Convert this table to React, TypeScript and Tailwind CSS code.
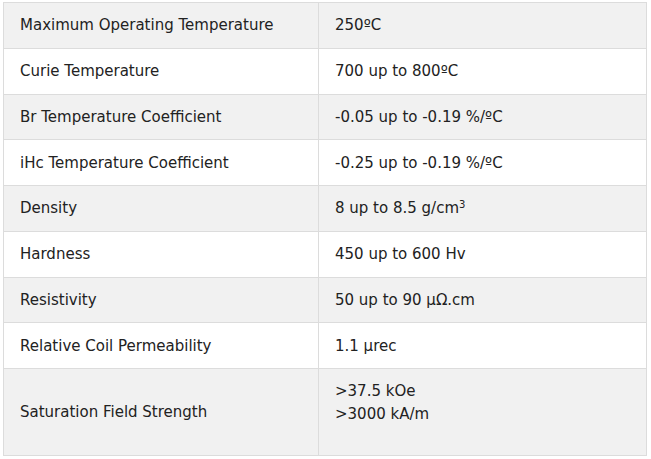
import React from "react";

const rows: { k: string; v: React.ReactNode; tall?: boolean }[] = [
  { k: "Maximum Operating Temperature", v: "250ºC" },
  { k: "Curie Temperature", v: "700 up to 800ºC" },
  { k: "Br Temperature Coefficient", v: "-0.05 up to -0.19 %/ºC" },
  { k: "iHc Temperature Coefficient", v: "-0.25 up to -0.19 %/ºC" },
  {
    k: "Density",
    v: (
      <>
        8 up to 8.5 g/cm<sup className="text-[10px]">3</sup>
      </>
    ),
  },
  { k: "Hardness", v: "450 up to 600 Hv" },
  { k: "Resistivity", v: "50 up to 90 μΩ.cm" },
  { k: "Relative Coil Permeability", v: "1.1 μrec" },
  {
    k: "Saturation Field Strength",
    v: (
      <>
        &gt;37.5 kOe
        <br />
        &gt;3000 kA/m
        <br />
        &nbsp;
      </>
    ),
    tall: true,
  },
];

export default function App() {
  return (
    <div className="w-[651px] h-[459px] bg-white pt-[2px] pl-[3px]">
      <div
        className="w-[644px] grid grid-cols-[315px_1fr] border-t border-l border-[#dcdcdc] text-[15px] leading-[23px] text-[#222222]"
        style={{ fontFamily: "'DejaVu Sans', sans-serif" }}
      >
        {rows.map((r, i) => {
          const bg = i % 2 === 0 ? "bg-[#f1f1f1]" : "bg-white";
          return (
            <React.Fragment key={i}>
              <div
                className={`${bg} border-r border-b border-[#dcdcdc] pl-[16px] pr-2 pt-[1px] flex items-center ${r.tall ? "h-[87px]" : "h-[45.75px]"}`}
              >
                {r.k}
              </div>
              <div
                className={`${bg} border-r border-b border-[#dcdcdc] pl-[16px] pr-2 ${r.tall ? "h-[87px] pt-[11px]" : "h-[45.75px] pt-[1px] flex items-center"}`}
              >
                <span>{r.v}</span>
              </div>
            </React.Fragment>
          );
        })}
      </div>
    </div>
  );
}
